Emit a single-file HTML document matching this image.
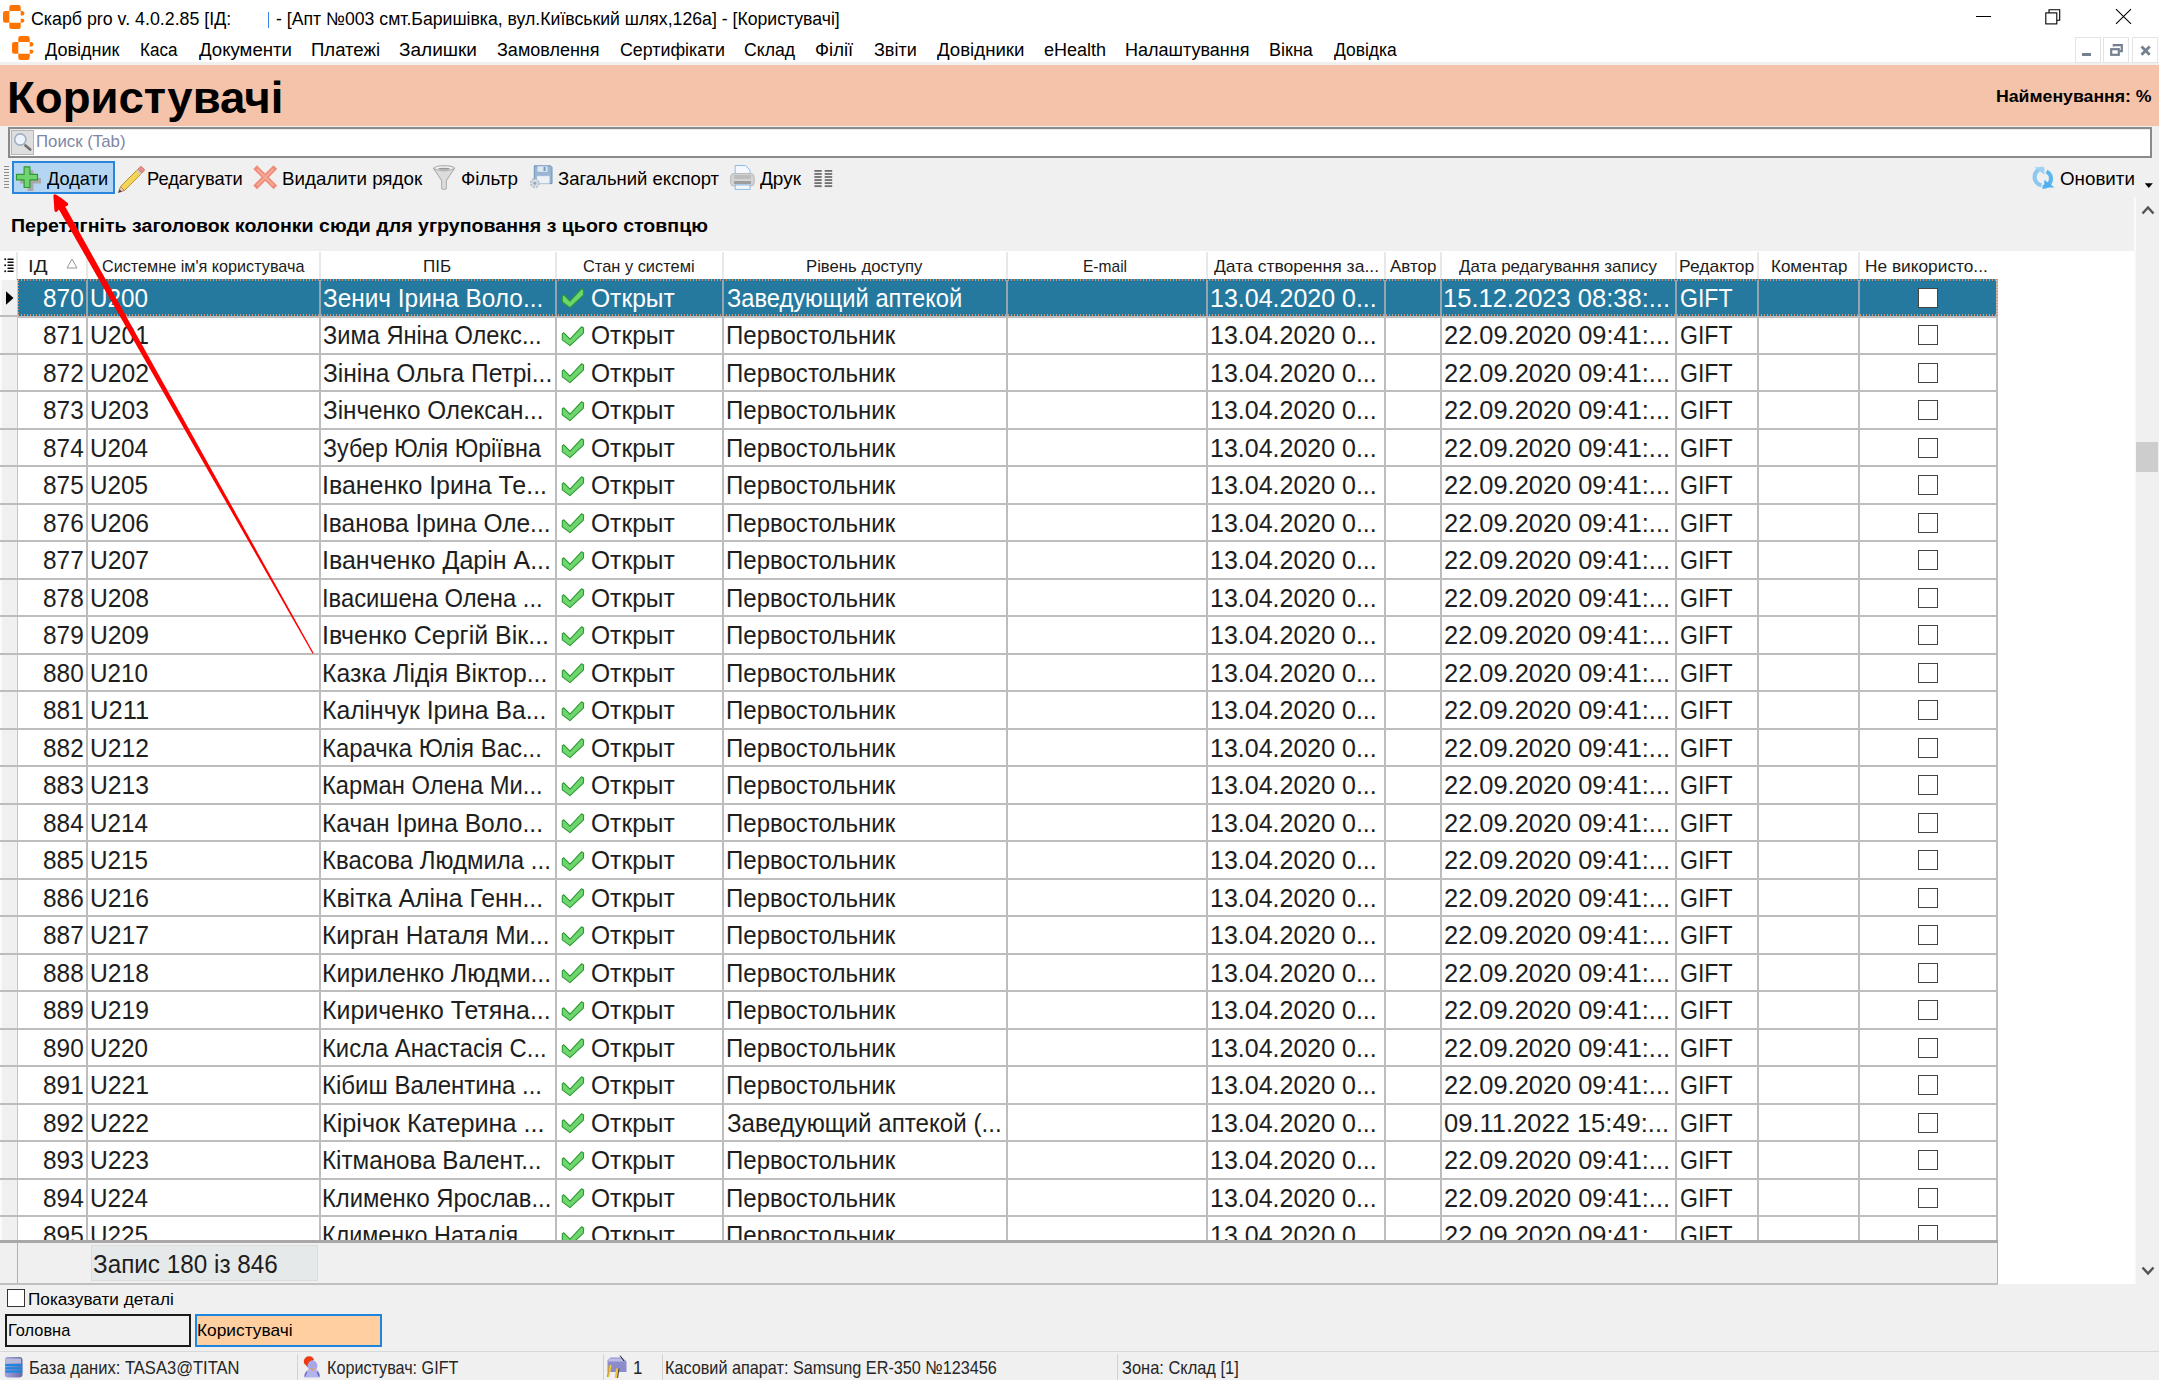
<!DOCTYPE html>
<html><head><meta charset="utf-8"><style>
html,body{margin:0;padding:0;}
body{width:2159px;height:1380px;position:relative;overflow:hidden;background:#f0f0f0;font-family:"Liberation Sans", sans-serif;}
.b{position:absolute;}
.t{position:absolute;white-space:nowrap;line-height:1;transform-origin:0 0;}
</style></head><body>
<div class="b" style="left:0px;top:0px;width:2159px;height:32px;background:#fff;"></div><svg width="22" height="24" viewBox="0 0 22 24" style="position:absolute;left:3.2px;top:4.9px">
<g fill="#ff7300">
<path d="M8.3 0H15.7Q17.6 0 17.7 2V6H6.3V2Q6.4 0 8.3 0z"/>
<path d="M8.3 23.9H15.7Q17.6 23.9 17.7 21.9V17.8H6.3V21.9Q6.4 23.9 8.3 23.9z"/>
<path d="M6.3 6V17.8H2.3Q0 17.8 0 15.5V8.3Q0 6 2.3 6z"/>
<path d="M17.7 6H19.3Q21.4 6.2 21.4 8.3Q21.4 10.6 19.5 10.6H17.7z"/>
<path d="M17.7 17.8H19.3Q21.4 17.6 21.4 15.5Q21.4 13.7 19.5 13.7H17.7z"/>
</g></svg><div class="t" style="transform:scaleX(0.9885);left:30.51px;top:10px;font-size:18px;color:#000;">Скарб pro v. 4.0.2.85 [ІД:</div><div class="b" style="left:268px;top:12px;width:1.2px;height:16px;background:#3b86e0;"></div><div class="t" style="transform:scaleX(0.9808);left:275.80px;top:10px;font-size:18px;color:#000;">- [Апт №003 смт.Баришівка, вул.Київський шлях,126а] - [Користувачі]</div><div class="b" style="left:1976px;top:16px;width:15px;height:1px;background:#000;"></div><svg style="position:absolute;left:2040px;top:5px" width="24" height="24"><rect x="5.8" y="7.9" width="11" height="11" fill="none" stroke="#000" stroke-width="1.1"/><path d="M9 7.9V4.7H19.7V15.3H16.8" fill="none" stroke="#000" stroke-width="1.1"/></svg><svg style="position:absolute;left:2112px;top:6px" width="22" height="22"><path d="M4 3.2L19 17.8M19 3.2L4 17.8" stroke="#000" stroke-width="1.1"/></svg><div class="b" style="left:0px;top:32px;width:2159px;height:30px;background:#fff;"></div><svg width="22" height="24" viewBox="0 0 22 24" style="position:absolute;left:11.8px;top:36.4px">
<g fill="#ff7300">
<path d="M8.3 0H15.7Q17.6 0 17.7 2V6H6.3V2Q6.4 0 8.3 0z"/>
<path d="M8.3 23.9H15.7Q17.6 23.9 17.7 21.9V17.8H6.3V21.9Q6.4 23.9 8.3 23.9z"/>
<path d="M6.3 6V17.8H2.3Q0 17.8 0 15.5V8.3Q0 6 2.3 6z"/>
<path d="M17.7 6H19.3Q21.4 6.2 21.4 8.3Q21.4 10.6 19.5 10.6H17.7z"/>
<path d="M17.7 17.8H19.3Q21.4 17.6 21.4 15.5Q21.4 13.7 19.5 13.7H17.7z"/>
</g></svg><div class="t" style="transform:scaleX(1.0000);left:45.00px;top:41px;font-size:18px;color:#000;">Довідник</div><div class="t" style="transform:scaleX(0.9487);left:140.05px;top:41px;font-size:18px;color:#000;">Каса</div><div class="t" style="transform:scaleX(1.0337);left:199.00px;top:41px;font-size:18px;color:#000;">Документи</div><div class="t" style="transform:scaleX(1.0308);left:310.97px;top:41px;font-size:18px;color:#000;">Платежі</div><div class="t" style="transform:scaleX(1.0556);left:398.94px;top:41px;font-size:18px;color:#000;">Залишки</div><div class="t" style="transform:scaleX(1.0000);left:497.00px;top:41px;font-size:18px;color:#000;">Замовлення</div><div class="t" style="transform:scaleX(0.9904);left:620.01px;top:41px;font-size:18px;color:#000;">Сертифікати</div><div class="t" style="transform:scaleX(0.9804);left:744.02px;top:41px;font-size:18px;color:#000;">Склад</div><div class="t" style="transform:scaleX(1.0278);left:814.97px;top:41px;font-size:18px;color:#000;">Філії</div><div class="t" style="transform:scaleX(1.0000);left:874.00px;top:41px;font-size:18px;color:#000;">Звіти</div><div class="t" style="transform:scaleX(1.0361);left:937.00px;top:41px;font-size:18px;color:#000;">Довідники</div><div class="t" style="transform:scaleX(1.0000);left:1044.00px;top:41px;font-size:18px;color:#000;">eHealth</div><div class="t" style="transform:scaleX(1.0000);left:1125.00px;top:41px;font-size:18px;color:#000;">Налаштування</div><div class="t" style="transform:scaleX(1.0000);left:1269.00px;top:41px;font-size:18px;color:#000;">Вікна</div><div class="t" style="transform:scaleX(0.9692);left:1334.00px;top:41px;font-size:18px;color:#000;">Довідка</div><div class="b" style="left:2075px;top:37px;width:25.5px;height:25.7px;box-sizing:border-box;background:#fff;border:1px solid #e4e4e4;"></div><div class="b" style="left:2103.3px;top:37px;width:25.5px;height:25.7px;box-sizing:border-box;background:#fff;border:1px solid #e4e4e4;"></div><div class="b" style="left:2132px;top:37px;width:25.5px;height:25.7px;box-sizing:border-box;background:#fff;border:1px solid #e4e4e4;"></div><div class="b" style="left:2082px;top:53px;width:9px;height:2.8px;background:#75818e;"></div><svg style="position:absolute;left:2109px;top:43px" width="16" height="14"><rect x="2.2" y="6.2" width="7.6" height="5.6" fill="none" stroke="#75818e" stroke-width="2.2"/><path d="M4.8 3.6V2.2H12.8V8.2H11" fill="none" stroke="#75818e" stroke-width="2.2"/></svg><svg style="position:absolute;left:2139px;top:44px" width="14" height="14"><path d="M2.5 2.5L10.7 10.7M10.7 2.5L2.5 10.7" stroke="#75818e" stroke-width="2.8"/></svg><div class="b" style="left:0px;top:62.7px;width:2159px;height:2px;background:#f0f0f0;"></div><div class="b" style="left:0px;top:64.5px;width:2159px;height:62.5px;background:#f5c3aa;"></div><div class="t" style="transform:scaleX(1.0127);left:7.36px;top:75px;font-size:45px;color:#000;font-weight:bold;">Користувачі</div><div class="t" style="transform:scaleX(1.0403);left:1995.96px;top:88px;font-size:17px;color:#000;font-weight:bold;">Найменування: %</div><div class="b" style="left:0px;top:126px;width:2159px;height:1134px;background:#f0f0f0;"></div><div class="b" style="left:7.7px;top:127px;width:2144.5px;height:30.5px;box-sizing:border-box;background:#fff;border:2px solid #8a8a8a;box-shadow:inset 1px 1px 0 #ececec;"></div><div class="b" style="left:11px;top:130px;width:23px;height:24.7px;box-sizing:border-box;background:#dedede;border:1.5px solid #b6b6b6;"></div><svg style="position:absolute;left:11px;top:130px" width="24" height="24"><circle cx="9.3" cy="9.5" r="5.6" fill="#eef2fc" stroke="#9fb0c4" stroke-width="1.6"/><path d="M14.4 15.4L19.2 19.6" stroke="#707070" stroke-width="2.6" stroke-linecap="round"/></svg><div class="t" style="transform:scaleX(0.9888);left:36.01px;top:133px;font-size:17px;color:#7f86a6;">Поиск (Tab)</div><div class="b" style="left:4.3px;top:165.8px;width:4.5px;height:1.3px;background:#8a8a8a;"></div><div class="b" style="left:4.3px;top:168.82000000000002px;width:4.5px;height:1.3px;background:#8a8a8a;"></div><div class="b" style="left:4.3px;top:171.84px;width:4.5px;height:1.3px;background:#8a8a8a;"></div><div class="b" style="left:4.3px;top:174.86px;width:4.5px;height:1.3px;background:#8a8a8a;"></div><div class="b" style="left:4.3px;top:177.88000000000002px;width:4.5px;height:1.3px;background:#8a8a8a;"></div><div class="b" style="left:4.3px;top:180.9px;width:4.5px;height:1.3px;background:#8a8a8a;"></div><div class="b" style="left:4.3px;top:183.92000000000002px;width:4.5px;height:1.3px;background:#8a8a8a;"></div><div class="b" style="left:4.3px;top:186.94px;width:4.5px;height:1.3px;background:#8a8a8a;"></div><div class="b" style="left:12px;top:161px;width:102.5px;height:33px;box-sizing:border-box;background:#b5d6f3;border:2px solid #2a86da;"></div><svg style="position:absolute;left:14px;top:164px" width="30" height="28"><path d="M13.6 6.3h5.8v7.6h7.6v5.5h-7.6v7.6h-5.8v-7.6H6v-5.5h7.6z" fill="#a9a9a9"/><path d="M10.1 2.8h5.8v7.6h7.6v5.5h-7.6v7.6h-5.8v-7.6H2.5v-5.5h7.6z" fill="#6fd36f" stroke="#2e9a35" stroke-width="1.2" stroke-linejoin="round"/></svg><div class="t" style="transform:scaleX(0.9836);left:47.00px;top:170px;font-size:18.5px;color:#000;">Додати</div><svg style="position:absolute;left:116px;top:163px" width="30" height="30"><path d="M4.5 23.5L22 6L26 10L8.5 27.5z" fill="#f2d45c" stroke="#b8952a" stroke-width="1"/><path d="M22 6L24.3 3.7Q25 3 25.7 3.7L28.3 6.3Q29 7 28.3 7.7L26 10z" fill="#e98c8c" stroke="#c76" stroke-width="0.8"/><path d="M21 7L25 11" stroke="#c8c8c8" stroke-width="2"/><path d="M4.5 23.5L8.5 27.5L2.5 29.5z" fill="#f3c9a8" stroke="#a87a5a" stroke-width="0.8"/><path d="M2.3 29.7L3.6 26.2L5.8 28.4z" fill="#444"/></svg><div class="t" style="transform:scaleX(0.9895);left:147.01px;top:170px;font-size:18.5px;color:#000;">Редагувати</div><svg style="position:absolute;left:252px;top:164px" width="26" height="26"><path d="M5 5L21.5 21.5M21.5 5L5 21.5" stroke="#ef8a78" stroke-width="5.2" stroke-linecap="square"/><path d="M5 5L21.5 21.5M21.5 5L5 21.5" stroke="#f6a898" stroke-width="2"/></svg><div class="t" style="transform:scaleX(1.0146);left:281.99px;top:170px;font-size:18.5px;color:#000;">Видалити рядок</div><svg style="position:absolute;left:432px;top:164px" width="26" height="28"><ellipse cx="12" cy="4.6" rx="10.2" ry="3" fill="#f4f4f4" stroke="#b4b4b4" stroke-width="1.2"/><path d="M1.8 4.8L9.6 16.5V24.5Q12 26.5 14.4 24.5V16.5L22.2 4.8Q12 9 1.8 4.8z" fill="#dcdcdc" stroke="#b0b0b0" stroke-width="1.1"/><ellipse cx="12" cy="4.8" rx="6" ry="1" fill="#999"/></svg><div class="t" style="transform:scaleX(1.0182);left:460.98px;top:170px;font-size:18.5px;color:#000;">Фільтр</div><svg style="position:absolute;left:528px;top:164px" width="26" height="28"><path d="M6.3 1.8H22.5L24 3.3V19.6H6.3z" fill="#9ab4d4" stroke="#6f93bf" stroke-width="1"/><rect x="9.5" y="2.3" width="10" height="5.5" fill="#dfe9f4"/><rect x="15.5" y="2.8" width="2.2" height="4.2" fill="#7c9cc4"/><rect x="9" y="12" width="12.5" height="7.4" fill="#eef2f6" stroke="#c8d2dc" stroke-width="0.6"/><circle cx="6.8" cy="19.2" r="4.2" fill="#d6dbe0" stroke="#b5bcc4" stroke-width="1.5" stroke-dasharray="2 1.3"/><circle cx="6.8" cy="19.2" r="1.5" fill="#8aa8c8"/></svg><div class="t" style="transform:scaleX(1.0000);left:558.00px;top:170px;font-size:18.5px;color:#000;">Загальний експорт</div><svg style="position:absolute;left:729px;top:164px" width="28" height="28"><path d="M6.2 1.5H16.5L21 6V10H6.2z" fill="#f4f8fd" stroke="#8cbcea" stroke-width="1"/><rect x="1.6" y="9.5" width="23.6" height="12.5" rx="3.5" fill="#d4d4d4" stroke="#b8b8b8" stroke-width="1"/><rect x="5" y="11" width="17" height="4" fill="#bdbdbd"/><rect x="5" y="17" width="17" height="3" fill="#9e9e9e"/><rect x="6.2" y="21" width="14.8" height="4.4" fill="#f4f8fd" stroke="#8cbcea" stroke-width="1"/></svg><div class="t" style="transform:scaleX(1.0250);left:760.00px;top:170px;font-size:18.5px;color:#000;">Друк</div><svg style="position:absolute;left:813px;top:168px" width="22" height="20"><g fill="#6e6e6e"><rect x="1.4" y="2.00" width="7.3" height="1.8"/><rect x="11.7" y="2.00" width="7.5" height="1.8"/><rect x="1.4" y="5.05" width="7.3" height="1.8"/><rect x="11.7" y="5.05" width="7.5" height="1.8"/><rect x="1.4" y="8.10" width="7.3" height="1.8"/><rect x="11.7" y="8.10" width="7.5" height="1.8"/><rect x="1.4" y="11.15" width="7.3" height="1.8"/><rect x="11.7" y="11.15" width="7.5" height="1.8"/><rect x="1.4" y="14.20" width="7.3" height="1.8"/><rect x="11.7" y="14.20" width="7.5" height="1.8"/><rect x="1.4" y="17.25" width="7.3" height="1.8"/><rect x="11.7" y="17.25" width="7.5" height="1.8"/></g></svg><svg style="position:absolute;left:2030px;top:165px" width="28" height="26"><path d="M12.5 3.5A8.6 8.6 0 0 0 11.5 20.5" fill="none" stroke="#8ec8f0" stroke-width="4.2"/><path d="M16.5 6.5A8.2 8.2 0 0 1 12.5 22" fill="none" stroke="#5cb6f0" stroke-width="4.2"/><path d="M4.3 2.3H14.4V9.8z" fill="#9ed2f4"/><path d="M24.5 22.5H14.3V14.8z" fill="#4fb0f0"/></svg><div class="t" style="transform:scaleX(1.0139);left:2059.99px;top:170px;font-size:18.5px;color:#000;">Оновити</div><svg style="position:absolute;left:2144px;top:182px" width="10" height="8"><path d="M0.8 1.3H8.8L4.8 6z" fill="#000"/></svg><div class="t" style="transform:scaleX(1.0708);left:10.93px;top:217px;font-size:18.3px;color:#000;font-weight:bold;">Перетягніть заголовок колонки сюди для угруповання з цього стовпцю</div><div class="b" style="left:0px;top:251px;width:2135px;height:29px;background:#fff;"></div><div class="b" style="left:0px;top:280px;width:2135px;height:961px;background:#fff;"></div><div class="b" style="left:16px;top:252px;width:1.5px;height:28px;background:#e8e8e8;"></div><div class="b" style="left:86px;top:252px;width:1.5px;height:28px;background:#e8e8e8;"></div><div class="b" style="left:319px;top:252px;width:1.5px;height:28px;background:#e8e8e8;"></div><div class="b" style="left:555px;top:252px;width:1.5px;height:28px;background:#e8e8e8;"></div><div class="b" style="left:722px;top:252px;width:1.5px;height:28px;background:#e8e8e8;"></div><div class="b" style="left:1006px;top:252px;width:1.5px;height:28px;background:#e8e8e8;"></div><div class="b" style="left:1206px;top:252px;width:1.5px;height:28px;background:#e8e8e8;"></div><div class="b" style="left:1384px;top:252px;width:1.5px;height:28px;background:#e8e8e8;"></div><div class="b" style="left:1440px;top:252px;width:1.5px;height:28px;background:#e8e8e8;"></div><div class="b" style="left:1675px;top:252px;width:1.5px;height:28px;background:#e8e8e8;"></div><div class="b" style="left:1757px;top:252px;width:1.5px;height:28px;background:#e8e8e8;"></div><div class="b" style="left:1858px;top:252px;width:1.5px;height:28px;background:#e8e8e8;"></div><div class="t" style="transform:scaleX(1.2000);left:27.80px;top:258px;font-size:17px;color:#1c1c1c;">ІД</div><div class="t" style="transform:scaleX(0.9528);left:102.05px;top:258px;font-size:17px;color:#1c1c1c;">Системне ім'я користувача</div><div class="t" style="transform:scaleX(1.0000);left:423.00px;top:258px;font-size:17px;color:#1c1c1c;">ПІБ</div><div class="t" style="transform:scaleX(0.9649);left:583.04px;top:258px;font-size:17px;color:#1c1c1c;">Стан у системі</div><div class="t" style="transform:scaleX(0.9831);left:806.02px;top:258px;font-size:17px;color:#1c1c1c;">Рівень доступу</div><div class="t" style="transform:scaleX(0.9149);left:1083.09px;top:258px;font-size:17px;color:#1c1c1c;">E-mail</div><div class="t" style="transform:scaleX(1.0314);left:1214.00px;top:258px;font-size:17px;color:#1c1c1c;">Дата створення за...</div><div class="t" style="transform:scaleX(1.0000);left:1390.00px;top:258px;font-size:17px;color:#1c1c1c;">Автор</div><div class="t" style="transform:scaleX(0.9950);left:1459.00px;top:258px;font-size:17px;color:#1c1c1c;">Дата редагування запису</div><div class="t" style="transform:scaleX(1.0278);left:1678.97px;top:258px;font-size:17px;color:#1c1c1c;">Редактор</div><div class="t" style="transform:scaleX(1.0000);left:1771.00px;top:258px;font-size:17px;color:#1c1c1c;">Коментар</div><div class="t" style="transform:scaleX(1.0168);left:1864.98px;top:258px;font-size:17px;color:#1c1c1c;">Не використо...</div><svg style="position:absolute;left:66px;top:258px" width="12" height="12"><path d="M6 1L11 10H1z" fill="none" stroke="#999" stroke-width="1"/></svg><svg style="position:absolute;left:0;top:250px" width="17" height="30"><g fill="#111"><circle cx="5.2" cy="9.3" r="1"/><circle cx="5.2" cy="15.3" r="1"/><circle cx="5.2" cy="21.3" r="1"/><rect x="7.3" y="8.5" width="6.5" height="1.6" rx="0.8"/><rect x="7.3" y="11.5" width="6.5" height="1.6" rx="0.8"/><rect x="7.3" y="14.5" width="6.5" height="1.6" rx="0.8"/><rect x="7.3" y="17.5" width="6.5" height="1.6" rx="0.8"/><rect x="7.3" y="20.5" width="6.5" height="1.6" rx="0.8"/></g></svg><div class="b" style="left:17px;top:279.3px;width:1981px;height:37.2px;background:#26799e;"></div><div class="b" style="left:0px;top:316px;width:1998px;height:1.5px;background:#bdbdbd;"></div><div class="t" style="transform:scaleX(0.9381);left:43.46px;top:285px;font-size:26px;color:#fff;">870</div><div class="t" style="transform:scaleX(0.9333);left:90.13px;top:285px;font-size:26px;color:#fff;">U200</div><div class="t" style="transform:scaleX(0.9375);left:323.06px;top:285px;font-size:26px;color:#fff;">Зенич Ірина Воло...</div><svg style="position:absolute;left:555px;top:280.0px" width="32" height="32"><path d="M7.3 16L8.8 14.8L15 21.1L26.5 8.8L28.6 10L28.4 15.1L15 27.6L7.3 21.9z" fill="#6fd66f" stroke="#2a9a30" stroke-width="1.1" stroke-linejoin="round"/></svg><div class="t" style="transform:scaleX(0.9455);left:590.55px;top:285px;font-size:26px;color:#fff;">Открыт</div><div class="t" style="transform:scaleX(0.9109);left:727.39px;top:285px;font-size:26px;color:#fff;">Заведующий аптекой</div><div class="t" style="transform:scaleX(0.9612);left:1210.28px;top:285px;font-size:26px;color:#fff;">13.04.2020 0...</div><div class="t" style="transform:scaleX(0.9815);left:1443.04px;top:285px;font-size:26px;color:#fff;">15.12.2023 08:38:...</div><div class="t" style="transform:scaleX(0.8879);left:1679.61px;top:285px;font-size:26px;color:#fff;">GIFT</div><div class="b" style="left:1918px;top:287.5px;width:20px;height:20px;box-sizing:border-box;border:1.8px solid #444;background:#fff;"></div><div class="b" style="left:0px;top:353px;width:1998px;height:2px;background:#bdbdbd;"></div><div class="t" style="transform:scaleX(0.9381);left:43.46px;top:322px;font-size:26px;color:#1e1e1e;">871</div><div class="t" style="transform:scaleX(0.9492);left:90.10px;top:322px;font-size:26px;color:#1e1e1e;">U201</div><div class="t" style="transform:scaleX(0.9084);left:323.09px;top:322px;font-size:26px;color:#1e1e1e;">Зима Яніна Олекс...</div><svg style="position:absolute;left:555px;top:317.5px" width="32" height="32"><path d="M7.3 16L8.8 14.8L15 21.1L26.5 8.8L28.6 10L28.4 15.1L15 27.6L7.3 21.9z" fill="#6fd66f" stroke="#2a9a30" stroke-width="1.1" stroke-linejoin="round"/></svg><div class="t" style="transform:scaleX(0.9455);left:590.55px;top:322px;font-size:26px;color:#1e1e1e;">Открыт</div><div class="t" style="transform:scaleX(0.9243);left:726.45px;top:322px;font-size:26px;color:#1e1e1e;">Первостольник</div><div class="t" style="transform:scaleX(0.9612);left:1210.28px;top:322px;font-size:26px;color:#1e1e1e;">13.04.2020 0...</div><div class="t" style="transform:scaleX(0.9772);left:1444.02px;top:322px;font-size:26px;color:#1e1e1e;">22.09.2020 09:41:...</div><div class="t" style="transform:scaleX(0.8879);left:1679.61px;top:322px;font-size:26px;color:#1e1e1e;">GIFT</div><div class="b" style="left:1918px;top:325.0px;width:20px;height:20px;box-sizing:border-box;border:1.8px solid #444;background:#fff;"></div><div class="b" style="left:0px;top:390px;width:1998px;height:2px;background:#bdbdbd;"></div><div class="t" style="transform:scaleX(0.9381);left:43.46px;top:360px;font-size:26px;color:#1e1e1e;">872</div><div class="t" style="transform:scaleX(0.9492);left:90.10px;top:360px;font-size:26px;color:#1e1e1e;">U202</div><div class="t" style="transform:scaleX(0.9433);left:323.06px;top:360px;font-size:26px;color:#1e1e1e;">Зініна Ольга Петрі...</div><svg style="position:absolute;left:555px;top:355.0px" width="32" height="32"><path d="M7.3 16L8.8 14.8L15 21.1L26.5 8.8L28.6 10L28.4 15.1L15 27.6L7.3 21.9z" fill="#6fd66f" stroke="#2a9a30" stroke-width="1.1" stroke-linejoin="round"/></svg><div class="t" style="transform:scaleX(0.9455);left:590.55px;top:360px;font-size:26px;color:#1e1e1e;">Открыт</div><div class="t" style="transform:scaleX(0.9243);left:726.45px;top:360px;font-size:26px;color:#1e1e1e;">Первостольник</div><div class="t" style="transform:scaleX(0.9612);left:1210.28px;top:360px;font-size:26px;color:#1e1e1e;">13.04.2020 0...</div><div class="t" style="transform:scaleX(0.9772);left:1444.02px;top:360px;font-size:26px;color:#1e1e1e;">22.09.2020 09:41:...</div><div class="t" style="transform:scaleX(0.8879);left:1679.61px;top:360px;font-size:26px;color:#1e1e1e;">GIFT</div><div class="b" style="left:1918px;top:362.5px;width:20px;height:20px;box-sizing:border-box;border:1.8px solid #444;background:#fff;"></div><div class="b" style="left:0px;top:428px;width:1998px;height:2px;background:#bdbdbd;"></div><div class="t" style="transform:scaleX(0.9381);left:43.46px;top:397px;font-size:26px;color:#1e1e1e;">873</div><div class="t" style="transform:scaleX(0.9492);left:90.10px;top:397px;font-size:26px;color:#1e1e1e;">U203</div><div class="t" style="transform:scaleX(0.9335);left:323.07px;top:397px;font-size:26px;color:#1e1e1e;">Зінченко Олексан...</div><svg style="position:absolute;left:555px;top:392.5px" width="32" height="32"><path d="M7.3 16L8.8 14.8L15 21.1L26.5 8.8L28.6 10L28.4 15.1L15 27.6L7.3 21.9z" fill="#6fd66f" stroke="#2a9a30" stroke-width="1.1" stroke-linejoin="round"/></svg><div class="t" style="transform:scaleX(0.9455);left:590.55px;top:397px;font-size:26px;color:#1e1e1e;">Открыт</div><div class="t" style="transform:scaleX(0.9243);left:726.45px;top:397px;font-size:26px;color:#1e1e1e;">Первостольник</div><div class="t" style="transform:scaleX(0.9612);left:1210.28px;top:397px;font-size:26px;color:#1e1e1e;">13.04.2020 0...</div><div class="t" style="transform:scaleX(0.9772);left:1444.02px;top:397px;font-size:26px;color:#1e1e1e;">22.09.2020 09:41:...</div><div class="t" style="transform:scaleX(0.8879);left:1679.61px;top:397px;font-size:26px;color:#1e1e1e;">GIFT</div><div class="b" style="left:1918px;top:400.0px;width:20px;height:20px;box-sizing:border-box;border:1.8px solid #444;background:#fff;"></div><div class="b" style="left:0px;top:465px;width:1998px;height:2px;background:#bdbdbd;"></div><div class="t" style="transform:scaleX(0.9381);left:43.46px;top:435px;font-size:26px;color:#1e1e1e;">874</div><div class="t" style="transform:scaleX(0.9333);left:90.13px;top:435px;font-size:26px;color:#1e1e1e;">U204</div><div class="t" style="transform:scaleX(0.8951);left:323.10px;top:435px;font-size:26px;color:#1e1e1e;">Зубер Юлія Юріївна</div><svg style="position:absolute;left:555px;top:430.0px" width="32" height="32"><path d="M7.3 16L8.8 14.8L15 21.1L26.5 8.8L28.6 10L28.4 15.1L15 27.6L7.3 21.9z" fill="#6fd66f" stroke="#2a9a30" stroke-width="1.1" stroke-linejoin="round"/></svg><div class="t" style="transform:scaleX(0.9455);left:590.55px;top:435px;font-size:26px;color:#1e1e1e;">Открыт</div><div class="t" style="transform:scaleX(0.9243);left:726.45px;top:435px;font-size:26px;color:#1e1e1e;">Первостольник</div><div class="t" style="transform:scaleX(0.9612);left:1210.28px;top:435px;font-size:26px;color:#1e1e1e;">13.04.2020 0...</div><div class="t" style="transform:scaleX(0.9772);left:1444.02px;top:435px;font-size:26px;color:#1e1e1e;">22.09.2020 09:41:...</div><div class="t" style="transform:scaleX(0.8879);left:1679.61px;top:435px;font-size:26px;color:#1e1e1e;">GIFT</div><div class="b" style="left:1918px;top:437.5px;width:20px;height:20px;box-sizing:border-box;border:1.8px solid #444;background:#fff;"></div><div class="b" style="left:0px;top:503px;width:1998px;height:2px;background:#bdbdbd;"></div><div class="t" style="transform:scaleX(0.9381);left:43.46px;top:472px;font-size:26px;color:#1e1e1e;">875</div><div class="t" style="transform:scaleX(0.9333);left:90.13px;top:472px;font-size:26px;color:#1e1e1e;">U205</div><div class="t" style="transform:scaleX(0.9593);left:322.08px;top:472px;font-size:26px;color:#1e1e1e;">Іваненко Ірина Те...</div><svg style="position:absolute;left:555px;top:467.5px" width="32" height="32"><path d="M7.3 16L8.8 14.8L15 21.1L26.5 8.8L28.6 10L28.4 15.1L15 27.6L7.3 21.9z" fill="#6fd66f" stroke="#2a9a30" stroke-width="1.1" stroke-linejoin="round"/></svg><div class="t" style="transform:scaleX(0.9455);left:590.55px;top:472px;font-size:26px;color:#1e1e1e;">Открыт</div><div class="t" style="transform:scaleX(0.9243);left:726.45px;top:472px;font-size:26px;color:#1e1e1e;">Первостольник</div><div class="t" style="transform:scaleX(0.9612);left:1210.28px;top:472px;font-size:26px;color:#1e1e1e;">13.04.2020 0...</div><div class="t" style="transform:scaleX(0.9772);left:1444.02px;top:472px;font-size:26px;color:#1e1e1e;">22.09.2020 09:41:...</div><div class="t" style="transform:scaleX(0.8879);left:1679.61px;top:472px;font-size:26px;color:#1e1e1e;">GIFT</div><div class="b" style="left:1918px;top:475.0px;width:20px;height:20px;box-sizing:border-box;border:1.8px solid #444;background:#fff;"></div><div class="b" style="left:0px;top:540px;width:1998px;height:2px;background:#bdbdbd;"></div><div class="t" style="transform:scaleX(0.9381);left:43.46px;top:510px;font-size:26px;color:#1e1e1e;">876</div><div class="t" style="transform:scaleX(0.9492);left:90.10px;top:510px;font-size:26px;color:#1e1e1e;">U206</div><div class="t" style="transform:scaleX(0.9414);left:322.12px;top:510px;font-size:26px;color:#1e1e1e;">Іванова Ірина Оле...</div><svg style="position:absolute;left:555px;top:505.0px" width="32" height="32"><path d="M7.3 16L8.8 14.8L15 21.1L26.5 8.8L28.6 10L28.4 15.1L15 27.6L7.3 21.9z" fill="#6fd66f" stroke="#2a9a30" stroke-width="1.1" stroke-linejoin="round"/></svg><div class="t" style="transform:scaleX(0.9455);left:590.55px;top:510px;font-size:26px;color:#1e1e1e;">Открыт</div><div class="t" style="transform:scaleX(0.9243);left:726.45px;top:510px;font-size:26px;color:#1e1e1e;">Первостольник</div><div class="t" style="transform:scaleX(0.9612);left:1210.28px;top:510px;font-size:26px;color:#1e1e1e;">13.04.2020 0...</div><div class="t" style="transform:scaleX(0.9772);left:1444.02px;top:510px;font-size:26px;color:#1e1e1e;">22.09.2020 09:41:...</div><div class="t" style="transform:scaleX(0.8879);left:1679.61px;top:510px;font-size:26px;color:#1e1e1e;">GIFT</div><div class="b" style="left:1918px;top:512.5px;width:20px;height:20px;box-sizing:border-box;border:1.8px solid #444;background:#fff;"></div><div class="b" style="left:0px;top:578px;width:1998px;height:2px;background:#bdbdbd;"></div><div class="t" style="transform:scaleX(0.9381);left:43.46px;top:547px;font-size:26px;color:#1e1e1e;">877</div><div class="t" style="transform:scaleX(0.9492);left:90.10px;top:547px;font-size:26px;color:#1e1e1e;">U207</div><div class="t" style="transform:scaleX(0.9615);left:322.08px;top:547px;font-size:26px;color:#1e1e1e;">Іванченко Дарін А...</div><svg style="position:absolute;left:555px;top:542.5px" width="32" height="32"><path d="M7.3 16L8.8 14.8L15 21.1L26.5 8.8L28.6 10L28.4 15.1L15 27.6L7.3 21.9z" fill="#6fd66f" stroke="#2a9a30" stroke-width="1.1" stroke-linejoin="round"/></svg><div class="t" style="transform:scaleX(0.9455);left:590.55px;top:547px;font-size:26px;color:#1e1e1e;">Открыт</div><div class="t" style="transform:scaleX(0.9243);left:726.45px;top:547px;font-size:26px;color:#1e1e1e;">Первостольник</div><div class="t" style="transform:scaleX(0.9612);left:1210.28px;top:547px;font-size:26px;color:#1e1e1e;">13.04.2020 0...</div><div class="t" style="transform:scaleX(0.9772);left:1444.02px;top:547px;font-size:26px;color:#1e1e1e;">22.09.2020 09:41:...</div><div class="t" style="transform:scaleX(0.8879);left:1679.61px;top:547px;font-size:26px;color:#1e1e1e;">GIFT</div><div class="b" style="left:1918px;top:550.0px;width:20px;height:20px;box-sizing:border-box;border:1.8px solid #444;background:#fff;"></div><div class="b" style="left:0px;top:615px;width:1998px;height:2px;background:#bdbdbd;"></div><div class="t" style="transform:scaleX(0.9381);left:43.46px;top:585px;font-size:26px;color:#1e1e1e;">878</div><div class="t" style="transform:scaleX(0.9492);left:90.10px;top:585px;font-size:26px;color:#1e1e1e;">U208</div><div class="t" style="transform:scaleX(0.9139);left:322.17px;top:585px;font-size:26px;color:#1e1e1e;">Івасишена Олена ...</div><svg style="position:absolute;left:555px;top:580.0px" width="32" height="32"><path d="M7.3 16L8.8 14.8L15 21.1L26.5 8.8L28.6 10L28.4 15.1L15 27.6L7.3 21.9z" fill="#6fd66f" stroke="#2a9a30" stroke-width="1.1" stroke-linejoin="round"/></svg><div class="t" style="transform:scaleX(0.9455);left:590.55px;top:585px;font-size:26px;color:#1e1e1e;">Открыт</div><div class="t" style="transform:scaleX(0.9243);left:726.45px;top:585px;font-size:26px;color:#1e1e1e;">Первостольник</div><div class="t" style="transform:scaleX(0.9612);left:1210.28px;top:585px;font-size:26px;color:#1e1e1e;">13.04.2020 0...</div><div class="t" style="transform:scaleX(0.9772);left:1444.02px;top:585px;font-size:26px;color:#1e1e1e;">22.09.2020 09:41:...</div><div class="t" style="transform:scaleX(0.8879);left:1679.61px;top:585px;font-size:26px;color:#1e1e1e;">GIFT</div><div class="b" style="left:1918px;top:587.5px;width:20px;height:20px;box-sizing:border-box;border:1.8px solid #444;background:#fff;"></div><div class="b" style="left:0px;top:653px;width:1998px;height:2px;background:#bdbdbd;"></div><div class="t" style="transform:scaleX(0.9381);left:43.46px;top:622px;font-size:26px;color:#1e1e1e;">879</div><div class="t" style="transform:scaleX(0.9492);left:90.10px;top:622px;font-size:26px;color:#1e1e1e;">U209</div><div class="t" style="transform:scaleX(0.9601);left:322.08px;top:622px;font-size:26px;color:#1e1e1e;">Івченко Сергій Вік...</div><svg style="position:absolute;left:555px;top:617.5px" width="32" height="32"><path d="M7.3 16L8.8 14.8L15 21.1L26.5 8.8L28.6 10L28.4 15.1L15 27.6L7.3 21.9z" fill="#6fd66f" stroke="#2a9a30" stroke-width="1.1" stroke-linejoin="round"/></svg><div class="t" style="transform:scaleX(0.9455);left:590.55px;top:622px;font-size:26px;color:#1e1e1e;">Открыт</div><div class="t" style="transform:scaleX(0.9243);left:726.45px;top:622px;font-size:26px;color:#1e1e1e;">Первостольник</div><div class="t" style="transform:scaleX(0.9612);left:1210.28px;top:622px;font-size:26px;color:#1e1e1e;">13.04.2020 0...</div><div class="t" style="transform:scaleX(0.9772);left:1444.02px;top:622px;font-size:26px;color:#1e1e1e;">22.09.2020 09:41:...</div><div class="t" style="transform:scaleX(0.8879);left:1679.61px;top:622px;font-size:26px;color:#1e1e1e;">GIFT</div><div class="b" style="left:1918px;top:625.0px;width:20px;height:20px;box-sizing:border-box;border:1.8px solid #444;background:#fff;"></div><div class="b" style="left:0px;top:690px;width:1998px;height:2px;background:#bdbdbd;"></div><div class="t" style="transform:scaleX(0.9381);left:43.46px;top:660px;font-size:26px;color:#1e1e1e;">880</div><div class="t" style="transform:scaleX(0.9333);left:90.13px;top:660px;font-size:26px;color:#1e1e1e;">U210</div><div class="t" style="transform:scaleX(0.9511);left:322.10px;top:660px;font-size:26px;color:#1e1e1e;">Казка Лідія Віктор...</div><svg style="position:absolute;left:555px;top:655.0px" width="32" height="32"><path d="M7.3 16L8.8 14.8L15 21.1L26.5 8.8L28.6 10L28.4 15.1L15 27.6L7.3 21.9z" fill="#6fd66f" stroke="#2a9a30" stroke-width="1.1" stroke-linejoin="round"/></svg><div class="t" style="transform:scaleX(0.9455);left:590.55px;top:660px;font-size:26px;color:#1e1e1e;">Открыт</div><div class="t" style="transform:scaleX(0.9243);left:726.45px;top:660px;font-size:26px;color:#1e1e1e;">Первостольник</div><div class="t" style="transform:scaleX(0.9612);left:1210.28px;top:660px;font-size:26px;color:#1e1e1e;">13.04.2020 0...</div><div class="t" style="transform:scaleX(0.9772);left:1444.02px;top:660px;font-size:26px;color:#1e1e1e;">22.09.2020 09:41:...</div><div class="t" style="transform:scaleX(0.8879);left:1679.61px;top:660px;font-size:26px;color:#1e1e1e;">GIFT</div><div class="b" style="left:1918px;top:662.5px;width:20px;height:20px;box-sizing:border-box;border:1.8px solid #444;background:#fff;"></div><div class="b" style="left:0px;top:728px;width:1998px;height:2px;background:#bdbdbd;"></div><div class="t" style="transform:scaleX(0.9381);left:43.46px;top:697px;font-size:26px;color:#1e1e1e;">881</div><div class="t" style="transform:scaleX(0.9825);left:90.04px;top:697px;font-size:26px;color:#1e1e1e;">U211</div><div class="t" style="transform:scaleX(0.9513);left:322.10px;top:697px;font-size:26px;color:#1e1e1e;">Калінчук Ірина Ва...</div><svg style="position:absolute;left:555px;top:692.5px" width="32" height="32"><path d="M7.3 16L8.8 14.8L15 21.1L26.5 8.8L28.6 10L28.4 15.1L15 27.6L7.3 21.9z" fill="#6fd66f" stroke="#2a9a30" stroke-width="1.1" stroke-linejoin="round"/></svg><div class="t" style="transform:scaleX(0.9455);left:590.55px;top:697px;font-size:26px;color:#1e1e1e;">Открыт</div><div class="t" style="transform:scaleX(0.9243);left:726.45px;top:697px;font-size:26px;color:#1e1e1e;">Первостольник</div><div class="t" style="transform:scaleX(0.9612);left:1210.28px;top:697px;font-size:26px;color:#1e1e1e;">13.04.2020 0...</div><div class="t" style="transform:scaleX(0.9772);left:1444.02px;top:697px;font-size:26px;color:#1e1e1e;">22.09.2020 09:41:...</div><div class="t" style="transform:scaleX(0.8879);left:1679.61px;top:697px;font-size:26px;color:#1e1e1e;">GIFT</div><div class="b" style="left:1918px;top:700.0px;width:20px;height:20px;box-sizing:border-box;border:1.8px solid #444;background:#fff;"></div><div class="b" style="left:0px;top:765px;width:1998px;height:2px;background:#bdbdbd;"></div><div class="t" style="transform:scaleX(0.9381);left:43.46px;top:735px;font-size:26px;color:#1e1e1e;">882</div><div class="t" style="transform:scaleX(0.9492);left:90.10px;top:735px;font-size:26px;color:#1e1e1e;">U212</div><div class="t" style="transform:scaleX(0.9200);left:322.16px;top:735px;font-size:26px;color:#1e1e1e;">Карачка Юлія Вас...</div><svg style="position:absolute;left:555px;top:730.0px" width="32" height="32"><path d="M7.3 16L8.8 14.8L15 21.1L26.5 8.8L28.6 10L28.4 15.1L15 27.6L7.3 21.9z" fill="#6fd66f" stroke="#2a9a30" stroke-width="1.1" stroke-linejoin="round"/></svg><div class="t" style="transform:scaleX(0.9455);left:590.55px;top:735px;font-size:26px;color:#1e1e1e;">Открыт</div><div class="t" style="transform:scaleX(0.9243);left:726.45px;top:735px;font-size:26px;color:#1e1e1e;">Первостольник</div><div class="t" style="transform:scaleX(0.9612);left:1210.28px;top:735px;font-size:26px;color:#1e1e1e;">13.04.2020 0...</div><div class="t" style="transform:scaleX(0.9772);left:1444.02px;top:735px;font-size:26px;color:#1e1e1e;">22.09.2020 09:41:...</div><div class="t" style="transform:scaleX(0.8879);left:1679.61px;top:735px;font-size:26px;color:#1e1e1e;">GIFT</div><div class="b" style="left:1918px;top:737.5px;width:20px;height:20px;box-sizing:border-box;border:1.8px solid #444;background:#fff;"></div><div class="b" style="left:0px;top:803px;width:1998px;height:2px;background:#bdbdbd;"></div><div class="t" style="transform:scaleX(0.9381);left:43.46px;top:772px;font-size:26px;color:#1e1e1e;">883</div><div class="t" style="transform:scaleX(0.9492);left:90.10px;top:772px;font-size:26px;color:#1e1e1e;">U213</div><div class="t" style="transform:scaleX(0.9139);left:322.17px;top:772px;font-size:26px;color:#1e1e1e;">Карман Олена Ми...</div><svg style="position:absolute;left:555px;top:767.5px" width="32" height="32"><path d="M7.3 16L8.8 14.8L15 21.1L26.5 8.8L28.6 10L28.4 15.1L15 27.6L7.3 21.9z" fill="#6fd66f" stroke="#2a9a30" stroke-width="1.1" stroke-linejoin="round"/></svg><div class="t" style="transform:scaleX(0.9455);left:590.55px;top:772px;font-size:26px;color:#1e1e1e;">Открыт</div><div class="t" style="transform:scaleX(0.9243);left:726.45px;top:772px;font-size:26px;color:#1e1e1e;">Первостольник</div><div class="t" style="transform:scaleX(0.9612);left:1210.28px;top:772px;font-size:26px;color:#1e1e1e;">13.04.2020 0...</div><div class="t" style="transform:scaleX(0.9772);left:1444.02px;top:772px;font-size:26px;color:#1e1e1e;">22.09.2020 09:41:...</div><div class="t" style="transform:scaleX(0.8879);left:1679.61px;top:772px;font-size:26px;color:#1e1e1e;">GIFT</div><div class="b" style="left:1918px;top:775.0px;width:20px;height:20px;box-sizing:border-box;border:1.8px solid #444;background:#fff;"></div><div class="b" style="left:0px;top:840px;width:1998px;height:2px;background:#bdbdbd;"></div><div class="t" style="transform:scaleX(0.9381);left:43.46px;top:810px;font-size:26px;color:#1e1e1e;">884</div><div class="t" style="transform:scaleX(0.9333);left:90.13px;top:810px;font-size:26px;color:#1e1e1e;">U214</div><div class="t" style="transform:scaleX(0.9457);left:322.11px;top:810px;font-size:26px;color:#1e1e1e;">Качан Ірина Воло...</div><svg style="position:absolute;left:555px;top:805.0px" width="32" height="32"><path d="M7.3 16L8.8 14.8L15 21.1L26.5 8.8L28.6 10L28.4 15.1L15 27.6L7.3 21.9z" fill="#6fd66f" stroke="#2a9a30" stroke-width="1.1" stroke-linejoin="round"/></svg><div class="t" style="transform:scaleX(0.9455);left:590.55px;top:810px;font-size:26px;color:#1e1e1e;">Открыт</div><div class="t" style="transform:scaleX(0.9243);left:726.45px;top:810px;font-size:26px;color:#1e1e1e;">Первостольник</div><div class="t" style="transform:scaleX(0.9612);left:1210.28px;top:810px;font-size:26px;color:#1e1e1e;">13.04.2020 0...</div><div class="t" style="transform:scaleX(0.9772);left:1444.02px;top:810px;font-size:26px;color:#1e1e1e;">22.09.2020 09:41:...</div><div class="t" style="transform:scaleX(0.8879);left:1679.61px;top:810px;font-size:26px;color:#1e1e1e;">GIFT</div><div class="b" style="left:1918px;top:812.5px;width:20px;height:20px;box-sizing:border-box;border:1.8px solid #444;background:#fff;"></div><div class="b" style="left:0px;top:878px;width:1998px;height:2px;background:#bdbdbd;"></div><div class="t" style="transform:scaleX(0.9381);left:43.46px;top:847px;font-size:26px;color:#1e1e1e;">885</div><div class="t" style="transform:scaleX(0.9333);left:90.13px;top:847px;font-size:26px;color:#1e1e1e;">U215</div><div class="t" style="transform:scaleX(0.9221);left:322.16px;top:847px;font-size:26px;color:#1e1e1e;">Квасова Людмила ...</div><svg style="position:absolute;left:555px;top:842.5px" width="32" height="32"><path d="M7.3 16L8.8 14.8L15 21.1L26.5 8.8L28.6 10L28.4 15.1L15 27.6L7.3 21.9z" fill="#6fd66f" stroke="#2a9a30" stroke-width="1.1" stroke-linejoin="round"/></svg><div class="t" style="transform:scaleX(0.9455);left:590.55px;top:847px;font-size:26px;color:#1e1e1e;">Открыт</div><div class="t" style="transform:scaleX(0.9243);left:726.45px;top:847px;font-size:26px;color:#1e1e1e;">Первостольник</div><div class="t" style="transform:scaleX(0.9612);left:1210.28px;top:847px;font-size:26px;color:#1e1e1e;">13.04.2020 0...</div><div class="t" style="transform:scaleX(0.9772);left:1444.02px;top:847px;font-size:26px;color:#1e1e1e;">22.09.2020 09:41:...</div><div class="t" style="transform:scaleX(0.8879);left:1679.61px;top:847px;font-size:26px;color:#1e1e1e;">GIFT</div><div class="b" style="left:1918px;top:850.0px;width:20px;height:20px;box-sizing:border-box;border:1.8px solid #444;background:#fff;"></div><div class="b" style="left:0px;top:915px;width:1998px;height:2px;background:#bdbdbd;"></div><div class="t" style="transform:scaleX(0.9381);left:43.46px;top:885px;font-size:26px;color:#1e1e1e;">886</div><div class="t" style="transform:scaleX(0.9492);left:90.10px;top:885px;font-size:26px;color:#1e1e1e;">U216</div><div class="t" style="transform:scaleX(0.9539);left:322.09px;top:885px;font-size:26px;color:#1e1e1e;">Квітка Аліна Генн...</div><svg style="position:absolute;left:555px;top:880.0px" width="32" height="32"><path d="M7.3 16L8.8 14.8L15 21.1L26.5 8.8L28.6 10L28.4 15.1L15 27.6L7.3 21.9z" fill="#6fd66f" stroke="#2a9a30" stroke-width="1.1" stroke-linejoin="round"/></svg><div class="t" style="transform:scaleX(0.9455);left:590.55px;top:885px;font-size:26px;color:#1e1e1e;">Открыт</div><div class="t" style="transform:scaleX(0.9243);left:726.45px;top:885px;font-size:26px;color:#1e1e1e;">Первостольник</div><div class="t" style="transform:scaleX(0.9612);left:1210.28px;top:885px;font-size:26px;color:#1e1e1e;">13.04.2020 0...</div><div class="t" style="transform:scaleX(0.9772);left:1444.02px;top:885px;font-size:26px;color:#1e1e1e;">22.09.2020 09:41:...</div><div class="t" style="transform:scaleX(0.8879);left:1679.61px;top:885px;font-size:26px;color:#1e1e1e;">GIFT</div><div class="b" style="left:1918px;top:887.5px;width:20px;height:20px;box-sizing:border-box;border:1.8px solid #444;background:#fff;"></div><div class="b" style="left:0px;top:953px;width:1998px;height:2px;background:#bdbdbd;"></div><div class="t" style="transform:scaleX(0.9381);left:43.46px;top:922px;font-size:26px;color:#1e1e1e;">887</div><div class="t" style="transform:scaleX(0.9492);left:90.10px;top:922px;font-size:26px;color:#1e1e1e;">U217</div><div class="t" style="transform:scaleX(0.9399);left:322.12px;top:922px;font-size:26px;color:#1e1e1e;">Кирган Наталя Ми...</div><svg style="position:absolute;left:555px;top:917.5px" width="32" height="32"><path d="M7.3 16L8.8 14.8L15 21.1L26.5 8.8L28.6 10L28.4 15.1L15 27.6L7.3 21.9z" fill="#6fd66f" stroke="#2a9a30" stroke-width="1.1" stroke-linejoin="round"/></svg><div class="t" style="transform:scaleX(0.9455);left:590.55px;top:922px;font-size:26px;color:#1e1e1e;">Открыт</div><div class="t" style="transform:scaleX(0.9243);left:726.45px;top:922px;font-size:26px;color:#1e1e1e;">Первостольник</div><div class="t" style="transform:scaleX(0.9612);left:1210.28px;top:922px;font-size:26px;color:#1e1e1e;">13.04.2020 0...</div><div class="t" style="transform:scaleX(0.9772);left:1444.02px;top:922px;font-size:26px;color:#1e1e1e;">22.09.2020 09:41:...</div><div class="t" style="transform:scaleX(0.8879);left:1679.61px;top:922px;font-size:26px;color:#1e1e1e;">GIFT</div><div class="b" style="left:1918px;top:925.0px;width:20px;height:20px;box-sizing:border-box;border:1.8px solid #444;background:#fff;"></div><div class="b" style="left:0px;top:990px;width:1998px;height:2px;background:#bdbdbd;"></div><div class="t" style="transform:scaleX(0.9381);left:43.46px;top:960px;font-size:26px;color:#1e1e1e;">888</div><div class="t" style="transform:scaleX(0.9492);left:90.10px;top:960px;font-size:26px;color:#1e1e1e;">U218</div><div class="t" style="transform:scaleX(0.9494);left:322.10px;top:960px;font-size:26px;color:#1e1e1e;">Кириленко Людми...</div><svg style="position:absolute;left:555px;top:955.0px" width="32" height="32"><path d="M7.3 16L8.8 14.8L15 21.1L26.5 8.8L28.6 10L28.4 15.1L15 27.6L7.3 21.9z" fill="#6fd66f" stroke="#2a9a30" stroke-width="1.1" stroke-linejoin="round"/></svg><div class="t" style="transform:scaleX(0.9455);left:590.55px;top:960px;font-size:26px;color:#1e1e1e;">Открыт</div><div class="t" style="transform:scaleX(0.9243);left:726.45px;top:960px;font-size:26px;color:#1e1e1e;">Первостольник</div><div class="t" style="transform:scaleX(0.9612);left:1210.28px;top:960px;font-size:26px;color:#1e1e1e;">13.04.2020 0...</div><div class="t" style="transform:scaleX(0.9772);left:1444.02px;top:960px;font-size:26px;color:#1e1e1e;">22.09.2020 09:41:...</div><div class="t" style="transform:scaleX(0.8879);left:1679.61px;top:960px;font-size:26px;color:#1e1e1e;">GIFT</div><div class="b" style="left:1918px;top:962.5px;width:20px;height:20px;box-sizing:border-box;border:1.8px solid #444;background:#fff;"></div><div class="b" style="left:0px;top:1028px;width:1998px;height:2px;background:#bdbdbd;"></div><div class="t" style="transform:scaleX(0.9381);left:43.46px;top:997px;font-size:26px;color:#1e1e1e;">889</div><div class="t" style="transform:scaleX(0.9492);left:90.10px;top:997px;font-size:26px;color:#1e1e1e;">U219</div><div class="t" style="transform:scaleX(0.9574);left:322.09px;top:997px;font-size:26px;color:#1e1e1e;">Кириченко Тетяна...</div><svg style="position:absolute;left:555px;top:992.5px" width="32" height="32"><path d="M7.3 16L8.8 14.8L15 21.1L26.5 8.8L28.6 10L28.4 15.1L15 27.6L7.3 21.9z" fill="#6fd66f" stroke="#2a9a30" stroke-width="1.1" stroke-linejoin="round"/></svg><div class="t" style="transform:scaleX(0.9455);left:590.55px;top:997px;font-size:26px;color:#1e1e1e;">Открыт</div><div class="t" style="transform:scaleX(0.9243);left:726.45px;top:997px;font-size:26px;color:#1e1e1e;">Первостольник</div><div class="t" style="transform:scaleX(0.9612);left:1210.28px;top:997px;font-size:26px;color:#1e1e1e;">13.04.2020 0...</div><div class="t" style="transform:scaleX(0.9772);left:1444.02px;top:997px;font-size:26px;color:#1e1e1e;">22.09.2020 09:41:...</div><div class="t" style="transform:scaleX(0.8879);left:1679.61px;top:997px;font-size:26px;color:#1e1e1e;">GIFT</div><div class="b" style="left:1918px;top:1000.0px;width:20px;height:20px;box-sizing:border-box;border:1.8px solid #444;background:#fff;"></div><div class="b" style="left:0px;top:1065px;width:1998px;height:2px;background:#bdbdbd;"></div><div class="t" style="transform:scaleX(0.9381);left:43.46px;top:1035px;font-size:26px;color:#1e1e1e;">890</div><div class="t" style="transform:scaleX(0.9333);left:90.13px;top:1035px;font-size:26px;color:#1e1e1e;">U220</div><div class="t" style="transform:scaleX(0.9158);left:322.17px;top:1035px;font-size:26px;color:#1e1e1e;">Кисла Анастасія С...</div><svg style="position:absolute;left:555px;top:1030.0px" width="32" height="32"><path d="M7.3 16L8.8 14.8L15 21.1L26.5 8.8L28.6 10L28.4 15.1L15 27.6L7.3 21.9z" fill="#6fd66f" stroke="#2a9a30" stroke-width="1.1" stroke-linejoin="round"/></svg><div class="t" style="transform:scaleX(0.9455);left:590.55px;top:1035px;font-size:26px;color:#1e1e1e;">Открыт</div><div class="t" style="transform:scaleX(0.9243);left:726.45px;top:1035px;font-size:26px;color:#1e1e1e;">Первостольник</div><div class="t" style="transform:scaleX(0.9612);left:1210.28px;top:1035px;font-size:26px;color:#1e1e1e;">13.04.2020 0...</div><div class="t" style="transform:scaleX(0.9772);left:1444.02px;top:1035px;font-size:26px;color:#1e1e1e;">22.09.2020 09:41:...</div><div class="t" style="transform:scaleX(0.8879);left:1679.61px;top:1035px;font-size:26px;color:#1e1e1e;">GIFT</div><div class="b" style="left:1918px;top:1037.5px;width:20px;height:20px;box-sizing:border-box;border:1.8px solid #444;background:#fff;"></div><div class="b" style="left:0px;top:1103px;width:1998px;height:2px;background:#bdbdbd;"></div><div class="t" style="transform:scaleX(0.9381);left:43.46px;top:1072px;font-size:26px;color:#1e1e1e;">891</div><div class="t" style="transform:scaleX(0.9492);left:90.10px;top:1072px;font-size:26px;color:#1e1e1e;">U221</div><div class="t" style="transform:scaleX(0.9230);left:322.15px;top:1072px;font-size:26px;color:#1e1e1e;">Кібиш Валентина ...</div><svg style="position:absolute;left:555px;top:1067.5px" width="32" height="32"><path d="M7.3 16L8.8 14.8L15 21.1L26.5 8.8L28.6 10L28.4 15.1L15 27.6L7.3 21.9z" fill="#6fd66f" stroke="#2a9a30" stroke-width="1.1" stroke-linejoin="round"/></svg><div class="t" style="transform:scaleX(0.9455);left:590.55px;top:1072px;font-size:26px;color:#1e1e1e;">Открыт</div><div class="t" style="transform:scaleX(0.9243);left:726.45px;top:1072px;font-size:26px;color:#1e1e1e;">Первостольник</div><div class="t" style="transform:scaleX(0.9612);left:1210.28px;top:1072px;font-size:26px;color:#1e1e1e;">13.04.2020 0...</div><div class="t" style="transform:scaleX(0.9772);left:1444.02px;top:1072px;font-size:26px;color:#1e1e1e;">22.09.2020 09:41:...</div><div class="t" style="transform:scaleX(0.8879);left:1679.61px;top:1072px;font-size:26px;color:#1e1e1e;">GIFT</div><div class="b" style="left:1918px;top:1075.0px;width:20px;height:20px;box-sizing:border-box;border:1.8px solid #444;background:#fff;"></div><div class="b" style="left:0px;top:1140px;width:1998px;height:2px;background:#bdbdbd;"></div><div class="t" style="transform:scaleX(0.9381);left:43.46px;top:1110px;font-size:26px;color:#1e1e1e;">892</div><div class="t" style="transform:scaleX(0.9492);left:90.10px;top:1110px;font-size:26px;color:#1e1e1e;">U222</div><div class="t" style="transform:scaleX(0.9695);left:322.06px;top:1110px;font-size:26px;color:#1e1e1e;">Кірічок Катерина ...</div><svg style="position:absolute;left:555px;top:1105.0px" width="32" height="32"><path d="M7.3 16L8.8 14.8L15 21.1L26.5 8.8L28.6 10L28.4 15.1L15 27.6L7.3 21.9z" fill="#6fd66f" stroke="#2a9a30" stroke-width="1.1" stroke-linejoin="round"/></svg><div class="t" style="transform:scaleX(0.9455);left:590.55px;top:1110px;font-size:26px;color:#1e1e1e;">Открыт</div><div class="t" style="transform:scaleX(0.9287);left:727.37px;top:1110px;font-size:26px;color:#1e1e1e;">Заведующий аптекой (...</div><div class="t" style="transform:scaleX(0.9612);left:1210.28px;top:1110px;font-size:26px;color:#1e1e1e;">13.04.2020 0...</div><div class="t" style="transform:scaleX(0.9815);left:1444.02px;top:1110px;font-size:26px;color:#1e1e1e;">09.11.2022 15:49:...</div><div class="t" style="transform:scaleX(0.8879);left:1679.61px;top:1110px;font-size:26px;color:#1e1e1e;">GIFT</div><div class="b" style="left:1918px;top:1112.5px;width:20px;height:20px;box-sizing:border-box;border:1.8px solid #444;background:#fff;"></div><div class="b" style="left:0px;top:1178px;width:1998px;height:2px;background:#bdbdbd;"></div><div class="t" style="transform:scaleX(0.9381);left:43.46px;top:1147px;font-size:26px;color:#1e1e1e;">893</div><div class="t" style="transform:scaleX(0.9492);left:90.10px;top:1147px;font-size:26px;color:#1e1e1e;">U223</div><div class="t" style="transform:scaleX(0.9315);left:322.14px;top:1147px;font-size:26px;color:#1e1e1e;">Кітманова Валент...</div><svg style="position:absolute;left:555px;top:1142.5px" width="32" height="32"><path d="M7.3 16L8.8 14.8L15 21.1L26.5 8.8L28.6 10L28.4 15.1L15 27.6L7.3 21.9z" fill="#6fd66f" stroke="#2a9a30" stroke-width="1.1" stroke-linejoin="round"/></svg><div class="t" style="transform:scaleX(0.9455);left:590.55px;top:1147px;font-size:26px;color:#1e1e1e;">Открыт</div><div class="t" style="transform:scaleX(0.9243);left:726.45px;top:1147px;font-size:26px;color:#1e1e1e;">Первостольник</div><div class="t" style="transform:scaleX(0.9612);left:1210.28px;top:1147px;font-size:26px;color:#1e1e1e;">13.04.2020 0...</div><div class="t" style="transform:scaleX(0.9772);left:1444.02px;top:1147px;font-size:26px;color:#1e1e1e;">22.09.2020 09:41:...</div><div class="t" style="transform:scaleX(0.8879);left:1679.61px;top:1147px;font-size:26px;color:#1e1e1e;">GIFT</div><div class="b" style="left:1918px;top:1150.0px;width:20px;height:20px;box-sizing:border-box;border:1.8px solid #444;background:#fff;"></div><div class="b" style="left:0px;top:1215px;width:1998px;height:2px;background:#bdbdbd;"></div><div class="t" style="transform:scaleX(0.9381);left:43.46px;top:1185px;font-size:26px;color:#1e1e1e;">894</div><div class="t" style="transform:scaleX(0.9333);left:90.13px;top:1185px;font-size:26px;color:#1e1e1e;">U224</div><div class="t" style="transform:scaleX(0.9146);left:322.17px;top:1185px;font-size:26px;color:#1e1e1e;">Клименко Ярослав...</div><svg style="position:absolute;left:555px;top:1180.0px" width="32" height="32"><path d="M7.3 16L8.8 14.8L15 21.1L26.5 8.8L28.6 10L28.4 15.1L15 27.6L7.3 21.9z" fill="#6fd66f" stroke="#2a9a30" stroke-width="1.1" stroke-linejoin="round"/></svg><div class="t" style="transform:scaleX(0.9455);left:590.55px;top:1185px;font-size:26px;color:#1e1e1e;">Открыт</div><div class="t" style="transform:scaleX(0.9243);left:726.45px;top:1185px;font-size:26px;color:#1e1e1e;">Первостольник</div><div class="t" style="transform:scaleX(0.9612);left:1210.28px;top:1185px;font-size:26px;color:#1e1e1e;">13.04.2020 0...</div><div class="t" style="transform:scaleX(0.9772);left:1444.02px;top:1185px;font-size:26px;color:#1e1e1e;">22.09.2020 09:41:...</div><div class="t" style="transform:scaleX(0.8879);left:1679.61px;top:1185px;font-size:26px;color:#1e1e1e;">GIFT</div><div class="b" style="left:1918px;top:1187.5px;width:20px;height:20px;box-sizing:border-box;border:1.8px solid #444;background:#fff;"></div><div class="b" style="left:0px;top:1253px;width:1998px;height:2px;background:#bdbdbd;"></div><div class="t" style="transform:scaleX(0.9381);left:43.46px;top:1222px;font-size:26px;color:#1e1e1e;">895</div><div class="t" style="transform:scaleX(0.9333);left:90.13px;top:1222px;font-size:26px;color:#1e1e1e;">U225</div><div class="t" style="transform:scaleX(0.8975);left:322.20px;top:1222px;font-size:26px;color:#1e1e1e;">Клименко Наталія ...</div><svg style="position:absolute;left:555px;top:1217.5px" width="32" height="32"><path d="M7.3 16L8.8 14.8L15 21.1L26.5 8.8L28.6 10L28.4 15.1L15 27.6L7.3 21.9z" fill="#6fd66f" stroke="#2a9a30" stroke-width="1.1" stroke-linejoin="round"/></svg><div class="t" style="transform:scaleX(0.9455);left:590.55px;top:1222px;font-size:26px;color:#1e1e1e;">Открыт</div><div class="t" style="transform:scaleX(0.9243);left:726.45px;top:1222px;font-size:26px;color:#1e1e1e;">Первостольник</div><div class="t" style="transform:scaleX(0.9612);left:1210.28px;top:1222px;font-size:26px;color:#1e1e1e;">13.04.2020 0...</div><div class="t" style="transform:scaleX(0.9772);left:1444.02px;top:1222px;font-size:26px;color:#1e1e1e;">22.09.2020 09:41:...</div><div class="t" style="transform:scaleX(0.8879);left:1679.61px;top:1222px;font-size:26px;color:#1e1e1e;">GIFT</div><div class="b" style="left:1918px;top:1225.0px;width:20px;height:20px;box-sizing:border-box;border:1.8px solid #444;background:#fff;"></div><div class="b" style="left:86px;top:280px;width:2px;height:961px;background:#bdbdbd;"></div><div class="b" style="left:319px;top:280px;width:2px;height:961px;background:#bdbdbd;"></div><div class="b" style="left:555px;top:280px;width:2px;height:961px;background:#bdbdbd;"></div><div class="b" style="left:722px;top:280px;width:2px;height:961px;background:#bdbdbd;"></div><div class="b" style="left:1006px;top:280px;width:2px;height:961px;background:#bdbdbd;"></div><div class="b" style="left:1206px;top:280px;width:2px;height:961px;background:#bdbdbd;"></div><div class="b" style="left:1384px;top:280px;width:2px;height:961px;background:#bdbdbd;"></div><div class="b" style="left:1440px;top:280px;width:2px;height:961px;background:#bdbdbd;"></div><div class="b" style="left:1675px;top:280px;width:2px;height:961px;background:#bdbdbd;"></div><div class="b" style="left:1757px;top:280px;width:2px;height:961px;background:#bdbdbd;"></div><div class="b" style="left:1858px;top:280px;width:2px;height:961px;background:#bdbdbd;"></div><div class="b" style="left:1996px;top:280px;width:2px;height:961px;background:#bdbdbd;"></div><div class="b" style="left:86px;top:280px;width:2px;height:36px;background:#93a5b0;"></div><div class="b" style="left:319px;top:280px;width:2px;height:36px;background:#93a5b0;"></div><div class="b" style="left:555px;top:280px;width:2px;height:36px;background:#93a5b0;"></div><div class="b" style="left:722px;top:280px;width:2px;height:36px;background:#93a5b0;"></div><div class="b" style="left:1006px;top:280px;width:2px;height:36px;background:#93a5b0;"></div><div class="b" style="left:1206px;top:280px;width:2px;height:36px;background:#93a5b0;"></div><div class="b" style="left:1384px;top:280px;width:2px;height:36px;background:#93a5b0;"></div><div class="b" style="left:1440px;top:280px;width:2px;height:36px;background:#93a5b0;"></div><div class="b" style="left:1675px;top:280px;width:2px;height:36px;background:#93a5b0;"></div><div class="b" style="left:1757px;top:280px;width:2px;height:36px;background:#93a5b0;"></div><div class="b" style="left:1858px;top:280px;width:2px;height:36px;background:#93a5b0;"></div><div class="b" style="left:17.5px;top:279.3px;width:1980px;height:1.4px;background:repeating-linear-gradient(90deg,#d8926c 0 1.5px,transparent 1.5px 3px);"></div><div class="b" style="left:17.5px;top:314.2px;width:1980px;height:1.4px;background:repeating-linear-gradient(90deg,#d8926c 0 1.5px,transparent 1.5px 3px);"></div><div class="b" style="left:17.6px;top:279.3px;width:1.4px;height:36.5px;background:repeating-linear-gradient(180deg,#d8926c 0 1.5px,transparent 1.5px 3px);"></div><div class="b" style="left:1996.2px;top:279.3px;width:1.4px;height:36.5px;background:repeating-linear-gradient(180deg,#d8926c 0 1.5px,transparent 1.5px 3px);"></div><div class="b" style="left:0px;top:280px;width:17px;height:961px;background:#f0f0f0;"></div><div class="b" style="left:0px;top:280px;width:1.5px;height:961px;background:#fafafa;"></div><div class="b" style="left:16.5px;top:280px;width:1.5px;height:961px;background:#c4c4c4;"></div><div class="b" style="left:0px;top:315px;width:18px;height:2px;background:#bdbdbd;"></div><div class="b" style="left:0px;top:353px;width:18px;height:2px;background:#bdbdbd;"></div><div class="b" style="left:0px;top:390px;width:18px;height:2px;background:#bdbdbd;"></div><div class="b" style="left:0px;top:428px;width:18px;height:2px;background:#bdbdbd;"></div><div class="b" style="left:0px;top:465px;width:18px;height:2px;background:#bdbdbd;"></div><div class="b" style="left:0px;top:503px;width:18px;height:2px;background:#bdbdbd;"></div><div class="b" style="left:0px;top:540px;width:18px;height:2px;background:#bdbdbd;"></div><div class="b" style="left:0px;top:578px;width:18px;height:2px;background:#bdbdbd;"></div><div class="b" style="left:0px;top:615px;width:18px;height:2px;background:#bdbdbd;"></div><div class="b" style="left:0px;top:653px;width:18px;height:2px;background:#bdbdbd;"></div><div class="b" style="left:0px;top:690px;width:18px;height:2px;background:#bdbdbd;"></div><div class="b" style="left:0px;top:728px;width:18px;height:2px;background:#bdbdbd;"></div><div class="b" style="left:0px;top:765px;width:18px;height:2px;background:#bdbdbd;"></div><div class="b" style="left:0px;top:803px;width:18px;height:2px;background:#bdbdbd;"></div><div class="b" style="left:0px;top:840px;width:18px;height:2px;background:#bdbdbd;"></div><div class="b" style="left:0px;top:878px;width:18px;height:2px;background:#bdbdbd;"></div><div class="b" style="left:0px;top:915px;width:18px;height:2px;background:#bdbdbd;"></div><div class="b" style="left:0px;top:953px;width:18px;height:2px;background:#bdbdbd;"></div><div class="b" style="left:0px;top:990px;width:18px;height:2px;background:#bdbdbd;"></div><div class="b" style="left:0px;top:1028px;width:18px;height:2px;background:#bdbdbd;"></div><div class="b" style="left:0px;top:1065px;width:18px;height:2px;background:#bdbdbd;"></div><div class="b" style="left:0px;top:1103px;width:18px;height:2px;background:#bdbdbd;"></div><div class="b" style="left:0px;top:1140px;width:18px;height:2px;background:#bdbdbd;"></div><div class="b" style="left:0px;top:1178px;width:18px;height:2px;background:#bdbdbd;"></div><div class="b" style="left:0px;top:1215px;width:18px;height:2px;background:#bdbdbd;"></div><div class="b" style="left:0px;top:1253px;width:18px;height:2px;background:#bdbdbd;"></div><svg style="position:absolute;left:5px;top:290px" width="10" height="16"><path d="M1 1.3L8.5 8L1 14.7z" fill="#000"/></svg><div class="b" style="left:0px;top:1240px;width:1998px;height:3px;background:#a8a8a8;"></div><div class="b" style="left:0px;top:1243px;width:1998px;height:41px;background:#f0f0f0;"></div><div class="b" style="left:17px;top:1243px;width:1px;height:41px;background:#b0b0b0;"></div><div class="b" style="left:1997px;top:1243px;width:1px;height:41px;background:#b0b0b0;"></div><div class="b" style="left:0px;top:1283px;width:1998px;height:2px;background:#c0c0c0;"></div><div class="b" style="left:1998px;top:1240px;width:137px;height:44px;background:#fff;"></div><div class="b" style="left:91px;top:1245px;width:227px;height:36px;background:#e6e9ea;border:1px solid #dcdcdc;box-sizing:border-box"></div><div class="t" style="transform:scaleX(0.9337);left:93.07px;top:1251px;font-size:26px;color:#1e1e1e;">Запис 180 із 846</div><div class="b" style="left:2134px;top:197px;width:2px;height:1087px;background:#fafafa;"></div><div class="b" style="left:2136px;top:197px;width:23px;height:1087px;background:#f0f0f0;"></div><svg style="position:absolute;left:2141px;top:205px" width="14" height="10"><path d="M1.5 8.5L7 2.5L12.5 8.5" fill="none" stroke="#555" stroke-width="2.5"/></svg><svg style="position:absolute;left:2141px;top:1266px" width="14" height="10"><path d="M1.5 1.5L7 7.5L12.5 1.5" fill="none" stroke="#555" stroke-width="2.5"/></svg><div class="b" style="left:2136px;top:442px;width:22px;height:30px;background:#cdcdcd;"></div><div class="b" style="left:7px;top:1289px;width:18px;height:18px;box-sizing:border-box;border:1.5px solid #333;background:#fff;"></div><div class="t" style="transform:scaleX(1.0286);left:27.97px;top:1292px;font-size:16.7px;color:#000;">Показувати деталі</div><div class="b" style="left:5px;top:1314px;width:186px;height:33px;box-sizing:border-box;border:2px solid #1a1a1a;background:#f0f0f0;"></div><div class="t" style="transform:scaleX(1.0000);left:8.00px;top:1322px;font-size:16.4px;color:#000;">Головна</div><div class="b" style="left:195px;top:1314px;width:187px;height:33px;box-sizing:border-box;border:2px solid #1f86e0;background:#ffcfa0;"></div><div class="t" style="transform:scaleX(1.0562);left:196.94px;top:1322px;font-size:16.4px;color:#000;">Користувачі</div><div class="b" style="left:0px;top:1351px;width:2159px;height:29px;background:#f0f0f0;"></div><div class="b" style="left:0px;top:1350.5px;width:2159px;height:1.5px;background:#d8d8d8;"></div><div class="b" style="left:297.2px;top:1354px;width:1.2px;height:26px;background:#d2d2d2;"></div><div class="b" style="left:603px;top:1354px;width:1.2px;height:26px;background:#d2d2d2;"></div><div class="b" style="left:661.7px;top:1354px;width:1.2px;height:26px;background:#d2d2d2;"></div><div class="b" style="left:1117px;top:1354px;width:1.2px;height:26px;background:#d2d2d2;"></div><svg style="position:absolute;left:4px;top:1356px" width="20" height="23"><defs><linearGradient id="dbg" x1="0" y1="0" x2="1" y2="0"><stop offset="0" stop-color="#a4a4e0"/><stop offset="1" stop-color="#6a6aa8"/></linearGradient></defs><path d="M1.2 2.5Q1.5 1 3 1H16.5Q18.5 1.5 18.5 3.5V19.5Q18 21.5 15 21.5H4Q1.5 21.8 0.8 19.5z" fill="url(#dbg)"/><path d="M2 2.5H17V7.5H2z" fill="#b8b8d8"/><g fill="#1f86e0"><rect x="1.3" y="8" width="17" height="2.2"/><rect x="1.3" y="11.2" width="17" height="2.2"/><rect x="1.3" y="14.4" width="17" height="2.2"/></g></svg><div class="t" style="transform:scaleX(0.8708);left:29.13px;top:1358px;font-size:19px;color:#262626;">База даних: TASA3@TITAN</div><svg style="position:absolute;left:302px;top:1355px" width="20" height="24"><path d="M2.2 8.5A5 5 0 0 1 12 4.5L6 12.5z" fill="#ee3a10"/><ellipse cx="10.5" cy="10.8" rx="4.9" ry="5.5" fill="#a8a8e6"/><path d="M7.5 12.5Q10.5 15.5 13.5 12.5L12 16H9z" fill="#e8a050"/><path d="M2.3 22.5Q2 15 8 14L10.5 16L13 14Q18.5 15 17.7 22.5z" fill="#b4b4ec"/><path d="M3 21.5Q3.5 18 5 17" stroke="#7070c8" stroke-width="1.5" fill="none"/><path d="M17 21.5Q16.5 18 15 17" stroke="#6060b0" stroke-width="1.5" fill="none"/></svg><div class="t" style="transform:scaleX(0.8506);left:327.15px;top:1358px;font-size:19px;color:#262626;">Користувач: GIFT</div><svg style="position:absolute;left:606px;top:1354px" width="22" height="25"><path d="M1.5 6.5L4.5 3.5H16L20.5 7.5V18H1.5z" fill="#8c8ccc"/><path d="M3 4.5H16L19 7.5H2z" fill="#bcbce4"/><path d="M14 1.5L18 7" stroke="#222" stroke-width="1"/><path d="M4.3 11L2 23" stroke="#f0d040" stroke-width="2.6"/><path d="M3.5 11L1.5 23" stroke="#c08020" stroke-width="0.8"/><path d="M11.5 14.5L10 24" stroke="#f0c040" stroke-width="2.6"/><path d="M13 14.5L11.6 24" stroke="#333" stroke-width="0.9"/></svg><div class="t" style="transform:scaleX(0.8889);left:633.11px;top:1358px;font-size:19px;color:#262626;">1</div><div class="t" style="transform:scaleX(0.8531);left:665.15px;top:1358px;font-size:19px;color:#262626;">Касовий апарат: Samsung ER-350 №123456</div><div class="t" style="transform:scaleX(0.8647);left:1122.14px;top:1358px;font-size:19px;color:#262626;">Зона: Склад [1]</div><svg style="position:absolute;left:0;top:0" width="2159" height="1380"><path d="M55 195.8L56 210.3Q58 207 62 206.5L66.6 204.2Q61 199 55 195.8z" fill="#f00" stroke="#f00" stroke-width="3.2" stroke-linejoin="round"/><path d="M55.5 203.5L61.5 200L313.6 653.1L312.6 653.7z" fill="#f00"/></svg>
</body></html>
